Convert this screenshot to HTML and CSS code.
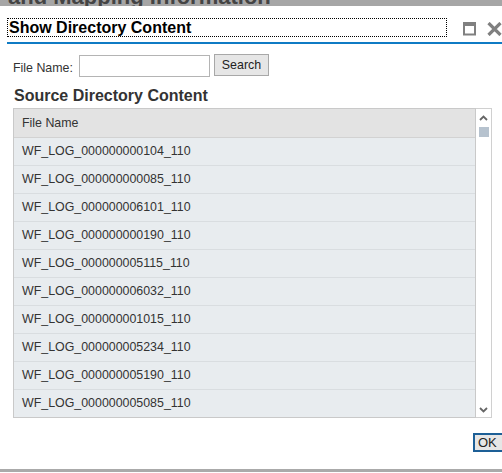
FILE: index.html
```html
<!DOCTYPE html>
<html>
<head>
<meta charset="utf-8">
<link rel="stylesheet" href="styles.css">
</head>
<body>
<div class="page-behind"><span>and Mapping Information</span></div>
<div class="dialog">
  <div class="titlebar">
    <div class="title">Show Directory Content</div>
    <div class="title-icons">
      <svg class="ico-max" width="13" height="14" viewBox="0 0 13 14"><rect x="1" y="1.5" width="11" height="11" fill="none" stroke="#808080" stroke-width="2"/><rect x="0" y="0" width="13" height="4" fill="#808080"/></svg>
      <svg class="ico-close" width="15" height="14" viewBox="0 0 15 14"><path d="M1.5 1 L13.5 13 M13.5 1 L1.5 13" stroke="#808080" stroke-width="3.2" fill="none"/></svg>
    </div>
  </div>
  <div class="content">
    <div class="search-row">
      <label class="lbl">File Name:</label>
      <input class="inp" type="text">
      <button class="btn">Search</button>
    </div>
    <h2 class="heading">Source Directory Content</h2>
    <div class="grid">
      <div class="list">
        <div class="hdr">File Name</div>
        <div class="row">WF_LOG_000000000104_110</div>
        <div class="row">WF_LOG_000000000085_110</div>
        <div class="row">WF_LOG_000000006101_110</div>
        <div class="row">WF_LOG_000000000190_110</div>
        <div class="row">WF_LOG_000000005115_110</div>
        <div class="row">WF_LOG_000000006032_110</div>
        <div class="row">WF_LOG_000000001015_110</div>
        <div class="row">WF_LOG_000000005234_110</div>
        <div class="row">WF_LOG_000000005190_110</div>
        <div class="row last">WF_LOG_000000005085_110</div>
      </div>
      <div class="scrollbar">
        <svg class="arr" width="9" height="6" viewBox="0 0 9 6"><path d="M1 5 L4.5 1.5 L8 5" stroke="#666" stroke-width="1.8" fill="none"/></svg>
        <div class="thumb"></div>
        <div class="spacer"></div>
        <svg class="arr" width="9" height="6" viewBox="0 0 9 6"><path d="M1 1 L4.5 4.5 L8 1" stroke="#666" stroke-width="1.8" fill="none"/></svg>
      </div>
    </div>
    <div class="footer">
      <button class="ok">OK</button>
    </div>
  </div>
  <div class="bottom-line"></div>
</div>
</body>
</html>
```

FILE: styles.css
```css
html, body {
  margin: 0;
  padding: 0;
}
body {
  width: 502px;
  height: 473px;
  overflow: hidden;
  background: #e0e0e0;
  font-family: "Liberation Sans", Arial, sans-serif;
}
.page-behind {
  height: 6px;
  overflow: hidden;
  background: #a6a6a6;
  padding-left: 8px;
}
.page-behind span {
  display: block;
  margin-top: -14px;
  font-size: 22px;
  line-height: 22px;
  font-weight: bold;
  color: #444;
  white-space: nowrap;
}
.dialog {
  background: #fff;
  height: 467px;
  display: flex;
  flex-direction: column;
}
.titlebar {
  margin-left: 7px;
  height: 36px;
  border-bottom: 2px solid #0f7bc4;
  display: flex;
  align-items: flex-start;
}
.title {
  margin-top: 12px;
  width: 437px;
  height: 17px;
  border: 1px dotted #000;
  padding-left: 1px;
  font-size: 16px;
  line-height: 17px;
  font-weight: bold;
  color: #000;
  white-space: nowrap;
}
.title-icons {
  margin-top: 16px;
  margin-left: 16px;
  display: flex;
  gap: 11px;
}
.content {
  padding-left: 13px;
  display: flex;
  flex-direction: column;
}
.search-row {
  margin-top: 10px;
  display: flex;
  align-items: flex-start;
  height: 23px;
}
.lbl {
  font-size: 12.4px;
  color: #333;
  margin-top: 7px;
  width: 66px;
}
.inp {
  margin: 1px 0 0 0;
  width: 131px;
  height: 22px;
  box-sizing: border-box;
  border: 1px solid #b4b4b4;
  padding: 0;
  background: #fff;
}
.btn {
  margin-left: 4px;
  width: 55px;
  height: 22px;
  box-sizing: border-box;
  border: 1px solid #a8a8a8;
  background: #e6e6e6;
  font-family: "Liberation Sans", Arial, sans-serif;
  font-size: 12.4px;
  color: #222;
  padding: 0;
  border-radius: 0;
}
.heading {
  margin: 9px 0 2px 1px;
  font-size: 16px;
  line-height: 20px;
  font-weight: bold;
  color: #333;
}
.grid {
  display: flex;
  width: 479px;
  height: 310px;
}
.list {
  width: 461px;
  border: 1px solid #c9c9c9;
  display: flex;
  flex-direction: column;
  overflow: hidden;
  background: #e8ecef;
}
.hdr {
  height: 28px;
  line-height: 28px;
  background: #e3e3e3;
  border-bottom: 1px solid #d2d2d2;
  padding-left: 8px;
  font-size: 12.4px;
  color: #333;
  flex: none;
}
.row {
  height: 27px;
  line-height: 27px;
  border-bottom: 1px solid #d9dde0;
  padding-left: 8px;
  font-size: 12.4px;
  color: #333;
  flex: none;
}
.row.last {
  border-bottom: none;
}
.scrollbar {
  width: 16px;
  border: 1px solid #d0d0d0;
  border-left: none;
  background: #fff;
  display: flex;
  flex-direction: column;
  align-items: center;
  padding: 6px 0 4px;
  box-sizing: border-box;
}
.thumb {
  margin-top: 6px;
  width: 10px;
  height: 10px;
  background: #b6c2ce;
}
.spacer {
  flex: 1;
}
.footer {
  margin-top: 15px;
  display: flex;
  justify-content: flex-end;
  margin-right: -3px;
}
.ok {
  width: 32px;
  height: 19px;
  box-sizing: border-box;
  border: 2px solid #1d5f96;
  background: #e6e6e6;
  font-family: "Liberation Sans", Arial, sans-serif;
  font-size: 13px;
  line-height: 14px;
  color: #222;
  padding: 0 0 0 3px;
  text-align: left;
  border-radius: 0;
}
.bottom-line {
  margin-top: auto;
  height: 3px;
  margin-bottom: 1px;
  background: #aaaaaa;
}
```
